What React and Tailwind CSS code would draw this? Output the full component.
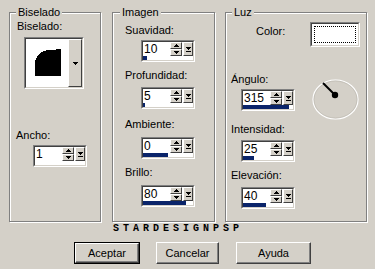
// Propiedades de biselado (diálogo estilo Windows clásico)
const UP = 'M2 0H3V1H4V2H5V3H0V2H1V1H2Z'
const DOWN = 'M0 0H5V1H4V2H3V3H2V2H1V1H0Z'

function SpinBtn({ up }) {
  return (
    <div className="flex-1 flex items-center justify-center bg-[#d4d0c8] border border-t-white border-l-white border-b-[#404040] border-r-[#404040]">
      <svg width="5" height="3" viewBox="0 0 5 3" shapeRendering="crispEdges">
        <path d={up ? UP : DOWN} fill="#000" />
      </svg>
    </div>
  )
}

function DropArrow() {
  return (
    <svg width="5" height="5" viewBox="0 0 5 5" shapeRendering="crispEdges">
      <path d={DOWN} fill="#000" />
      <rect x="0" y="4" width="5" height="1" fill="#000" />
    </svg>
  )
}

function Spin({ value, bar }) {
  return (
    <div className="w-[54px] h-[22px] border border-t-[#808080] border-l-[#808080] border-b-white border-r-white">
      <div className="h-full flex flex-col bg-white border border-t-[#404040] border-l-[#404040] border-b-[#d4d0c8] border-r-[#d4d0c8]">
        <div className="flex h-[14px]">
          <div className="w-[27px] pl-[1px] text-[12px] leading-[14px]">{value}</div>
          <div className="w-[12px] flex flex-col">
            <SpinBtn up />
            <SpinBtn />
          </div>
          <div className="w-[1px]" />
          <div className="w-[10px] flex items-center justify-center bg-[#d4d0c8] border border-t-white border-l-white border-b-[#404040] border-r-[#404040]">
            <DropArrow />
          </div>
        </div>
        <div className="h-[4px]">
          <div className="h-full bg-[#0a246a]" style={{ width: bar }} />
        </div>
      </div>
    </div>
  )
}

function Label({ children, className = '' }) {
  return <div className={`text-[11px] leading-[13px] ${className}`}>{children}</div>
}

function Group({ title, legend, className, children }) {
  return (
    <div className={`relative h-[210px] border border-[#808080] shadow-[inset_1px_1px_0_#fff,1px_1px_0_#fff] ${className}`}>
      <span className={`absolute top-[-7px] px-[2px] bg-[#d4d0c8] text-[11px] leading-[13px] ${legend}`}>{title}</span>
      <div className="flex flex-col items-start">{children}</div>
    </div>
  )
}

function Button({ children, def, className }) {
  return (
    <div className={`h-[22px] ${def ? 'border border-black' : ''} ${className}`}>
      <div className="h-full flex items-center justify-center text-[11px] bg-[#d4d0c8] border border-t-white border-l-white border-b-[#404040] border-r-[#404040] shadow-[inset_-1px_-1px_0_#808080]">
        {children}
      </div>
    </div>
  )
}

export default function App() {
  return (
    <div className="w-[375px] h-[269px] overflow-hidden bg-[#d4d0c8] text-black font-['Liberation_Sans',Arial,sans-serif] pt-[12px]">
      <div className="flex pl-[9px]">
        {/* Biselado */}
        <Group title="Biselado" legend="left-[6px]" className="w-[92px]">
          <Label className="mt-[7px] ml-[7px]">Biselado:</Label>
          <div className="ml-[14px] mt-[4px] w-[60px] h-[52px] border border-t-[#808080] border-l-[#808080] border-b-white border-r-white">
            <div className="h-full flex bg-white border border-t-[#404040] border-l-[#404040] border-b-[#d4d0c8] border-r-[#d4d0c8]">
              <div className="flex-1">
                <svg className="ml-[9px] mt-[10px]" width="27" height="27" viewBox="0 0 27 27" shapeRendering="crispEdges">
                  <path d="M0 27V15A15 14 0 0 1 15 1L26 0V27Z" fill="#000" />
                </svg>
              </div>
              <div className="w-[14px] flex items-center justify-center bg-[#d4d0c8] border border-t-white border-l-white border-b-[#404040] border-r-[#404040]">
                <svg width="5" height="3" viewBox="0 0 5 3" shapeRendering="crispEdges">
                  <path d={DOWN} fill="#000" />
                </svg>
              </div>
            </div>
          </div>
          <Label className="mt-[40px] ml-[6px]">Ancho:</Label>
          <div className="ml-[23px] mt-[3px]">
            <Spin value="1" bar={0} />
          </div>
        </Group>

        {/* Imagen */}
        <Group title="Imagen" legend="left-[7px]" className="w-[103px] ml-[11px]">
          <Label className="mt-[11px] ml-[12px]">Suavidad:</Label>
          <div className="ml-[28px] mt-[3px]"><Spin value="10" bar={4} /></div>
          <Label className="mt-[7px] ml-[12px]">Profundidad:</Label>
          <div className="ml-[28px] mt-[5px]"><Spin value="5" bar={2} /></div>
          <Label className="mt-[9px] ml-[12px]">Ambiente:</Label>
          <div className="ml-[28px] mt-[6px]"><Spin value="0" bar={25} /></div>
          <Label className="mt-[7px] ml-[12px]">Brillo:</Label>
          <div className="ml-[28px] mt-[6px]"><Spin value="80" bar={43} /></div>
        </Group>

        {/* Luz */}
        <Group title="Luz" legend="left-[6px]" className="w-[142px] ml-[10px]">
          <div className="flex mt-[9px]">
            <Label className="ml-[30px] mt-[3px] w-[54px]">Color:</Label>
            <div className="w-[50px] h-[25px] border border-t-[#808080] border-l-[#808080] border-b-white border-r-white">
              <div className="h-full bg-white border border-t-[#404040] border-l-[#404040] border-b-[#d4d0c8] border-r-[#d4d0c8] p-[2px]">
                <div className="h-full border border-dotted border-black" />
              </div>
            </div>
          </div>
          <div className="flex mt-[26px]">
            <div className="w-[86px] flex flex-col items-start">
              <Label className="ml-[5px]">Ángulo:</Label>
              <div className="ml-[15px] mt-[3px]"><Spin value="315" bar={46} /></div>
            </div>
            <svg className="mt-[5px]" width="48" height="44" viewBox="0 0 48 44">
              <ellipse cx="23.5" cy="21.5" rx="22.5" ry="19.5" fill="none" stroke="#fff" strokeWidth="1.2" />
              <ellipse cx="23.5" cy="21.5" rx="21.5" ry="18.5" fill="none" stroke="#b9b5ad" strokeWidth="0.6" />
              <line x1="11" y1="5" x2="23" y2="17" stroke="#000" strokeWidth="2" />
              <circle cx="23" cy="17" r="3.2" fill="#000" />
            </svg>
          </div>
          <Label className="mt-[1px] ml-[5px]">Intensidad:</Label>
          <div className="ml-[15px] mt-[4px]"><Spin value="25" bar={11} /></div>
          <Label className="mt-[7px] ml-[5px]">Elevación:</Label>
          <div className="ml-[15px] mt-[5px]"><Spin value="40" bar={23} /></div>
        </Group>
      </div>

      <div className="mt-[2px] pl-[113px] h-[9px] text-[10px] leading-[9px] font-bold tracking-[4px] font-['Liberation_Mono',monospace]">
        STARDESIGNPSP
      </div>

      <div className="flex mt-[9px] pl-[74px]">
        <Button def className="w-[66px]">Aceptar</Button>
        <Button className="w-[63px] ml-[16px]">Cancelar</Button>
        <Button className="w-[75px] ml-[17px]">Ayuda</Button>
      </div>
    </div>
  )
}
